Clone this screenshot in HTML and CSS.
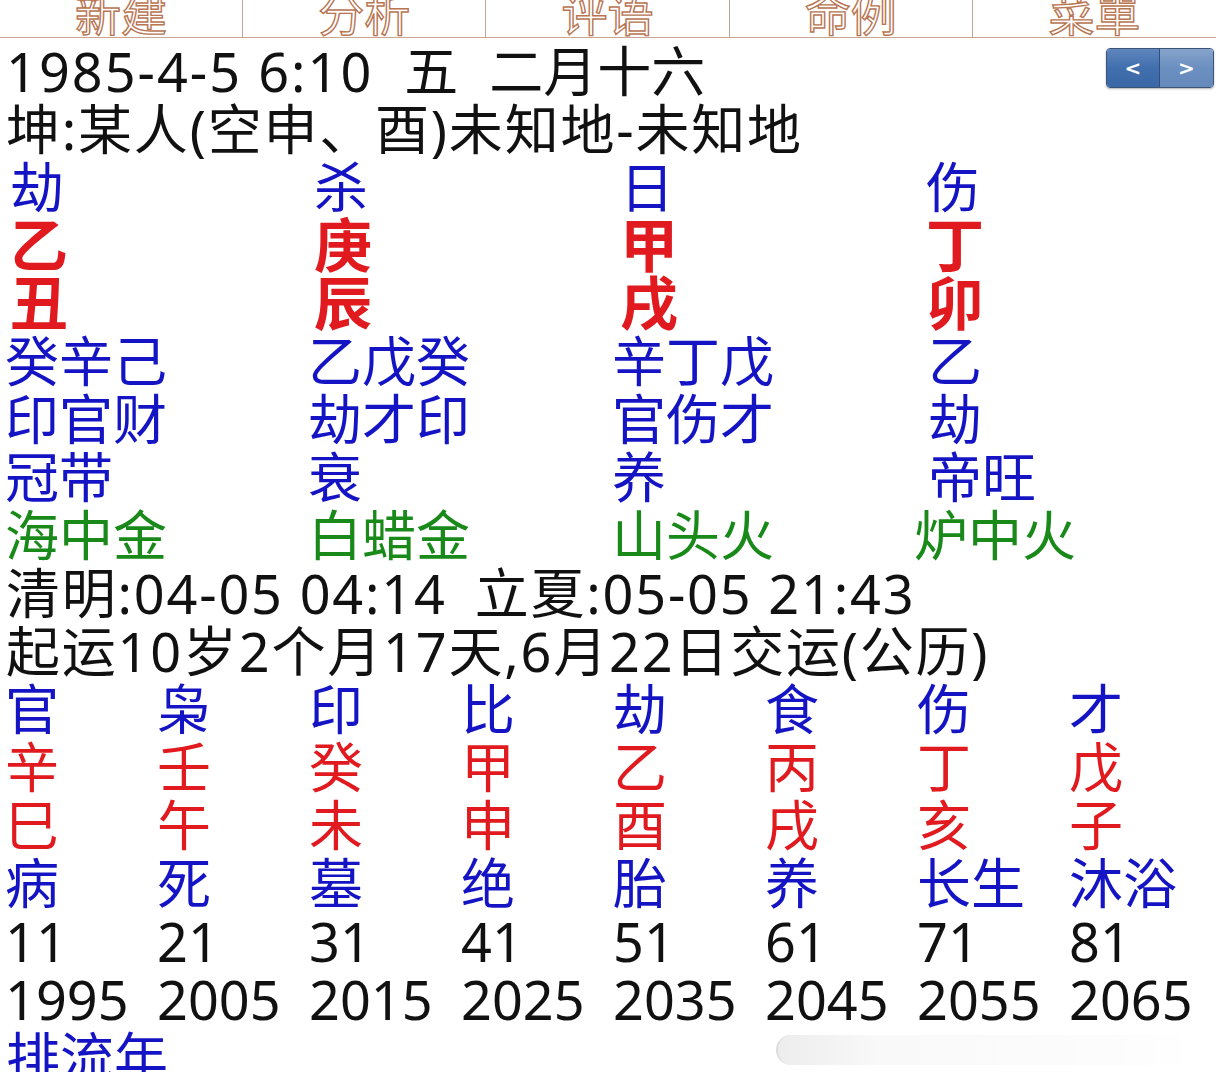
FILE: index.html
```html
<!DOCTYPE html>
<html lang="zh-CN">
<head>
    <meta charset="UTF-8">
    <meta name="viewport" content="width=device-width, initial-scale=1.0">
    <title>排盘</title>
    <link rel="stylesheet" href="styles.css">
</head>
<body>
    <nav class="tabs">
        <div class="tab">新建</div>
        <div class="tab">分析</div>
        <div class="tab">评语</div>
        <div class="tab">命例</div>
        <div class="tab">菜單</div>
    </nav>

    <main class="chart">
        <div class="line head">
            <span>1985-4-5 6:10</span><span class="gap">五</span><span class="gap">二月十六</span>
            <div class="pager">
                <button class="prev">&lt;</button>
                <button class="next">&gt;</button>
            </div>
        </div>
        <div class="line">坤:某人(空申、酉)未知地-未知地</div>

        <!-- 四柱 -->
        <div class="grid4 blue top">
            <span>劫</span><span>杀</span><span>日</span><span>伤</span>
        </div>
        <div class="grid4 red bold top">
            <span>乙</span><span>庚</span><span>甲</span><span>丁</span>
        </div>
        <div class="grid4 red bold top">
            <span>丑</span><span>辰</span><span>戌</span><span>卯</span>
        </div>
        <div class="grid4 blue">
            <span>癸辛己</span><span>乙戊癸</span><span>辛丁戊</span><span>乙</span>
        </div>
        <div class="grid4 blue">
            <span>印官财</span><span>劫才印</span><span>官伤才</span><span>劫</span>
        </div>
        <div class="grid4 blue">
            <span>冠带</span><span>衰</span><span>养</span><span>帝旺</span>
        </div>
        <div class="grid4 green nayin">
            <span>海中金</span><span>白蜡金</span><span>山头火</span><span>炉中火</span>
        </div>

        <div class="line">清明:04-05 04:14<span class="gap">立夏:05-05 21:43</span></div>
        <div class="line">起运10岁2个月17天,6月22日交运(公历)</div>

        <!-- 大运 -->
        <div class="grid8 blue">
            <span>官</span><span>枭</span><span>印</span><span>比</span><span>劫</span><span>食</span><span>伤</span><span>才</span>
        </div>
        <div class="grid8 red">
            <span>辛</span><span>壬</span><span>癸</span><span>甲</span><span>乙</span><span>丙</span><span>丁</span><span>戊</span>
        </div>
        <div class="grid8 red">
            <span>巳</span><span>午</span><span>未</span><span>申</span><span>酉</span><span>戌</span><span>亥</span><span>子</span>
        </div>
        <div class="grid8 blue">
            <span>病</span><span>死</span><span>墓</span><span>绝</span><span>胎</span><span>养</span><span>长生</span><span>沐浴</span>
        </div>
        <div class="grid8">
            <span>11</span><span>21</span><span>31</span><span>41</span><span>51</span><span>61</span><span>71</span><span>81</span>
        </div>
        <div class="grid8">
            <span>1995</span><span>2005</span><span>2015</span><span>2025</span><span>2035</span><span>2045</span><span>2055</span><span>2065</span>
        </div>
        <div class="line blue link">排流年</div>
    </main>

    <div class="scroll-hint"></div>
</body>
</html>
```

FILE: styles.css
```css
* {
    margin: 0;
    padding: 0;
    box-sizing: border-box;
}

body {
    width: 1216px;
    height: 1072px;
    overflow: hidden;
    background: #fff;
    color: #111;
    font-family: "Noto Sans", "Noto Sans CJK SC", sans-serif;
    position: relative;
}

/* top tabs */
.tabs {
    display: grid;
    grid-template-columns: repeat(5, 1fr);
    height: 38px;
    border-bottom: 1px solid #c9a596;
}

.tab {
    height: 37px;
    overflow: hidden;
    text-align: center;
    font-family: "Noto Sans CJK SC", sans-serif;
    font-size: 46px;
    line-height: 22px;
    color: #fff;
    -webkit-text-stroke: 1.4px #b87552;
    border-right: 1.5px solid #c0a494;
}

.tab:last-child {
    border-right: none;
}

/* chart */
.chart {
    padding-top: 4px;
    font-size: 54px;
}

.line {
    height: 58px;
    line-height: 58px;
    padding-left: 6px;
    white-space: nowrap;
    letter-spacing: 1.8px;
}

.line .gap {
    margin-left: 28px;
}

.head {
    display: flex;
    letter-spacing: 2px;
}

.head .gap {
    margin-left: 31px;
    letter-spacing: 0;
}

.pager {
    margin-left: auto;
    margin-right: 2px;
    margin-top: 6px;
    display: flex;
    height: 40px;
    border: 1px solid #3a5478;
    border-radius: 4px;
    overflow: hidden;
    box-shadow: 0 1px 2px rgba(0,0,0,0.3);
}

.pager button {
    width: 53px;
    border: none;
    color: #fff;
    font-family: "DejaVu Sans", sans-serif;
    font-size: 20px;
    font-weight: bold;
    line-height: 38px;
    letter-spacing: 0;
}

.pager .prev {
    background: linear-gradient(#5f86bd, #416fae 50%, #3b67a5);
    border-right: 1px solid #2f4f7e;
}

.pager .next {
    background: linear-gradient(#86a3cb, #6b8fc0 50%, #6589bb);
}

.link {
    letter-spacing: 0;
}

.grid4,
.grid8 {
    display: grid;
    height: 58px;
    line-height: 58px;
    padding-left: 5px;
    white-space: nowrap;
}

.grid4 {
    grid-template-columns: 303px 304px 316px 1fr;
}

.grid4.top {
    padding-left: 10px;
    grid-template-columns: 304px 306px 306px 1fr;
}

.nayin span:last-child {
    margin-left: -14px;
}

.grid8 {
    grid-template-columns: repeat(8, 152px);
}

.blue {
    color: #1414c4;
}

.red {
    color: #e01a1e;
}

.bold {
    font-weight: bold;
    font-size: 58px;
}

.green {
    color: #198a1a;
}

/* gesture hint at the bottom edge */
.scroll-hint {
    position: absolute;
    left: 776px;
    top: 1035px;
    width: 420px;
    height: 30px;
    border-radius: 15px;
    border-left: 2px solid #dcdcdc;
    background: linear-gradient(to right, rgba(0,0,0,0.07), rgba(0,0,0,0.025) 25%, rgba(0,0,0,0.012) 80%, rgba(0,0,0,0));
}
```
